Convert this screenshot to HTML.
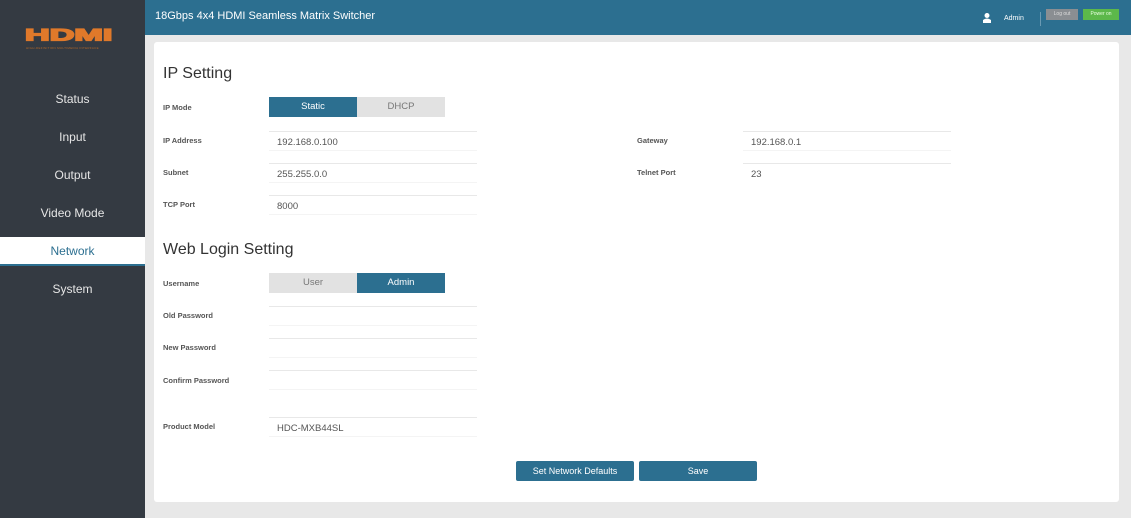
<!DOCTYPE html>
<html><head><meta charset="utf-8"><style>
*{margin:0;padding:0;box-sizing:border-box}
body{width:1131px;height:521px;overflow:hidden;background:#fff;font-family:"Liberation Sans",sans-serif;position:relative}
.a{position:absolute}
#side{left:0;top:0;width:145px;height:518px;background:#343a42}
#main{left:145px;top:0;width:986px;height:518px;background:#e8e8e8}
#hdr{left:145px;top:0;width:986px;height:35px;background:#2c6f90}
.nav{left:0;width:145px;height:28px;line-height:28px;text-align:center;color:#e6e6e6;font-size:12px}
.card{left:154px;top:42px;width:965px;height:460px;background:#fff;border-radius:3px}
.lbl{font-size:7.5px;font-weight:bold;color:#555}
.h{font-size:16px;color:#333}
.inp{width:208px;height:20px;border-top:1px solid #e8e8e8;border-bottom:1px solid #f4f4f4;font-size:9.5px;color:#555;padding-left:8px;padding-top:3px;line-height:16px}
.tg{height:20px;width:88px;text-align:center;line-height:20px;font-size:9.5px}
.on{background:#2c6f90;color:#fff}
.off{background:#e2e2e2;color:#777}
.btn{height:20px;background:#2c6f90;color:#fff;font-size:9px;text-align:center;line-height:20px;border-radius:2px}
</style></head><body>
<div id="side" class="a"></div>
<div id="main" class="a"></div>
<div id="hdr" class="a"></div>
<div class="a" style="left:25px;top:27px;color:#e0792a;font-weight:900;font-size:18px;line-height:18px;transform:scale(1.9,0.9);transform-origin:left top;-webkit-text-stroke:1.5px #e0792a">HDMI</div>
<div class="a" style="left:26px;top:46px;width:86px;font-size:3px;color:#b0672a;white-space:nowrap;overflow:hidden;letter-spacing:0.3px">HIGH-DEFINITION MULTIMEDIA INTERFACE</div>
<div class="a nav" style="top:85px">Status</div>
<div class="a nav" style="top:123px">Input</div>
<div class="a nav" style="top:161px">Output</div>
<div class="a nav" style="top:199px">Video Mode</div>
<div class="a nav" style="top:237px;background:#fff;color:#2c6f90;border-bottom:2px solid #2c6f90;height:29px">Network</div>
<div class="a nav" style="top:275px">System</div>
<div class="a" style="left:155px;top:10px;color:#fff;font-size:11px">18Gbps 4x4 HDMI Seamless Matrix Switcher</div>
<svg class="a" style="left:983px;top:13px" width="8" height="10"><circle cx="4" cy="2.5" r="2.5" fill="#fff"/><path d="M0 10 L0 7 Q4 4 8 7 L8 10Z" fill="#fff"/></svg>
<div class="a" style="left:1004px;top:15px;color:#fff;font-size:7px">Admin</div>
<div class="a" style="left:1040px;top:12px;width:1px;height:14px;background:#6a9ab3"></div>
<div class="a" style="left:1046px;top:9px;width:32px;height:11px;background:#8a8e92;color:#ddd;font-size:5px;text-align:center;line-height:11px">Log out</div>
<div class="a" style="left:1083px;top:9px;width:36px;height:11px;background:#5cb84a;color:#e8ffe0;font-size:5px;text-align:center;line-height:11px">Power on</div>
<div class="a card"></div>
<div class="a h" style="left:163px;top:65px">IP Setting</div>
<div class="a lbl" style="left:163px;top:103px">IP Mode</div>
<div class="a tg on" style="left:269px;top:97px">Static</div>
<div class="a tg off" style="left:357px;top:97px">DHCP</div>
<div class="a lbl" style="left:163px;top:136px">IP Address</div>
<div class="a inp" style="left:269px;top:131px">192.168.0.100</div>
<div class="a lbl" style="left:163px;top:168px">Subnet</div>
<div class="a inp" style="left:269px;top:163px">255.255.0.0</div>
<div class="a lbl" style="left:163px;top:200px">TCP Port</div>
<div class="a inp" style="left:269px;top:195px">8000</div>
<div class="a lbl" style="left:637px;top:136px">Gateway</div>
<div class="a inp" style="left:743px;top:131px">192.168.0.1</div>
<div class="a lbl" style="left:637px;top:168px">Telnet Port</div>
<div class="a inp" style="left:743px;top:163px;border-bottom:none">23</div>
<div class="a h" style="left:163px;top:241px">Web Login Setting</div>
<div class="a lbl" style="left:163px;top:279px">Username</div>
<div class="a tg off" style="left:269px;top:273px">User</div>
<div class="a tg on" style="left:357px;top:273px">Admin</div>
<div class="a lbl" style="left:163px;top:311px">Old Password</div>
<div class="a inp" style="left:269px;top:306px"></div>
<div class="a lbl" style="left:163px;top:343px">New Password</div>
<div class="a inp" style="left:269px;top:338px"></div>
<div class="a lbl" style="left:163px;top:376px">Confirm Password</div>
<div class="a inp" style="left:269px;top:370px"></div>
<div class="a lbl" style="left:163px;top:422px">Product Model</div>
<div class="a inp" style="left:269px;top:417px">HDC-MXB44SL</div>
<div class="a btn" style="left:516px;top:461px;width:118px">Set Network Defaults</div>
<div class="a btn" style="left:639px;top:461px;width:118px">Save</div>
</body></html>
